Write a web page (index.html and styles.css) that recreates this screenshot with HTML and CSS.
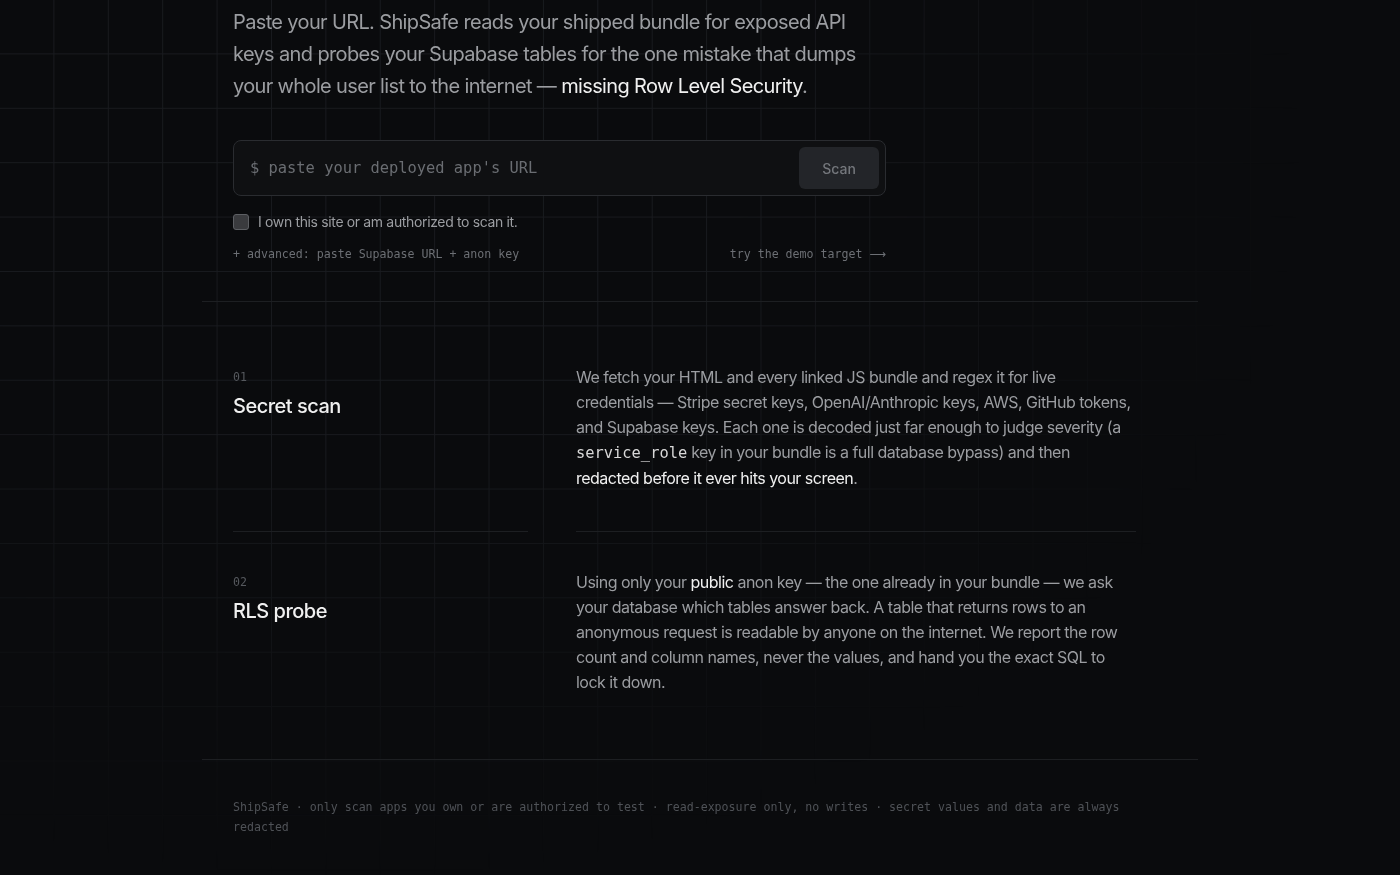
FILE: index.html
```html
<!DOCTYPE html>
<html lang="en">
<head>
<meta charset="utf-8">
<title>ShipSafe</title>
<link rel="stylesheet" href="styles.css">
</head>
<body>
<div class="grid-bg"></div>
<main class="container">
  <section class="hero">
    <p class="lead">Paste your URL. ShipSafe reads your shipped bundle for exposed API keys and probes your Supabase tables for the one mistake that dumps your whole user list to the internet — <span class="hl">missing Row Level Security</span>.</p>
    <form class="scan-box">
      <input class="scan-input" type="text" placeholder="$ paste your deployed app's URL">
      <button class="scan-btn" type="button">Scan</button>
    </form>
    <label class="consent"><span class="check"></span><span>I own this site or am authorized to scan it.</span></label>
    <div class="links">
      <span>+ advanced: paste Supabase URL + anon key</span>
      <span>try the demo target <span class="arrow">⟶</span></span>
    </div>
  </section>

  <section class="features">
    <div class="feature first">
      <div class="f-head">
        <div class="num">01</div>
        <h3 class="f-title">Secret scan</h3>
      </div>
      <p class="f-body">We fetch your HTML and every linked JS bundle and regex it for live credentials — Stripe secret keys, OpenAI/Anthropic keys, AWS, GitHub tokens, and Supabase keys. Each one is decoded just far enough to judge severity (a <code>service_role</code> key in your bundle is a full database bypass) and then <span class="hl">redacted before it ever hits your screen</span>.</p>
    </div>
    <div class="feature second">
      <div class="f-head">
        <div class="num">02</div>
        <h3 class="f-title">RLS probe</h3>
      </div>
      <p class="f-body">Using only your <span class="hl">public</span> anon key — the one already in your bundle — we ask your database which tables answer back. A table that returns rows to an anonymous request is readable by anyone on the internet. We report the row count and column names, never the values, and hand you the exact SQL to lock it down.</p>
    </div>
  </section>

  <footer class="footer">ShipSafe · only scan apps you own or are authorized to test · read-exposure only, no writes · secret values and data are always redacted</footer>
</main>
</body>
</html>
```

FILE: styles.css
```css
* { box-sizing: border-box; }

html, body {
  margin: 0;
  padding: 0;
  background: #0a0b0d;
  color: #9b9da1;
  font-family: Inter, "Noto Sans", sans-serif;
  min-height: 875px;
}

.grid-bg {
  position: fixed;
  inset: 0;
  pointer-events: none;
  background-image:
    linear-gradient(to right, transparent calc(100% - 1px), #191b1f 0),
    linear-gradient(to bottom, transparent calc(100% - 1px), #191b1f 0);
  background-size: 54.4px 54.4px;
  -webkit-mask-image: radial-gradient(ellipse 950px 720px at 25% 18%, #000 40%, transparent 100%);
  mask-image: radial-gradient(ellipse 950px 720px at 25% 18%, #000 40%, transparent 100%);
}

.container {
  position: relative;
  width: 996px;
  margin: 0 auto;
}

.hero {
  padding: 6px 31px 39px;
}

.lead {
  margin: 0;
  max-width: 640px;
  font-size: 20px;
  line-height: 32px;
  letter-spacing: -0.032em;
  color: #9b9da1;
}

.hl { color: #f0f0f0; }

.scan-box {
  margin: 38px 0 0;
  width: 653px;
  height: 56px;
  display: flex;
  align-items: center;
  padding: 0 6px 0 16px;
  background: #0f1012;
  border: 1px solid #2a2c30;
  border-radius: 8px;
}

.scan-input {
  flex: 1;
  background: transparent;
  border: 0;
  outline: none;
  font-family: "DejaVu Sans Mono", "Liberation Mono", monospace;
  font-size: 15.4px;
  color: #d0d0d0;
  padding: 0;
}
.scan-input::placeholder { color: #6a6d72; }

.scan-btn {
  width: 80px;
  height: 42px;
  border: 0;
  border-radius: 6px;
  background: #232529;
  color: #74777c;
  font-family: Inter, sans-serif;
  font-size: 14px;
  font-weight: 500;
}

.consent {
  margin-top: 18px;
  display: flex;
  align-items: center;
  gap: 9px;
  font-size: 14px;
  line-height: 16px;
  letter-spacing: -0.025em;
  color: #9b9da1;
}

.check {
  width: 16px;
  height: 16px;
  border-radius: 3px;
  background: #3a3b3e;
  border: 1px solid #5d5f63;
}

.links {
  margin-top: 16px;
  width: 653px;
  display: flex;
  justify-content: space-between;
  font-family: "DejaVu Sans Mono", "Liberation Mono", monospace;
  font-size: 11.6px;
  line-height: 16px;
  color: #6c6f74;
}
.arrow { font-family: "DejaVu Sans", sans-serif; }

.features {
  border-top: 1px solid #1d1f22;
  padding: 23px 31px 24px;
}

.feature {
  display: grid;
  grid-template-columns: 295px 560px;
  column-gap: 48px;
}

.f-head, .f-body {
  padding: 40px 0;
}
.feature.first .f-head,
.feature.first .f-body {
  border-bottom: 1px solid #1d1f22;
}
.feature.second .f-head,
.feature.second .f-body {
  padding-top: 38px;
}

.num {
  font-family: "DejaVu Sans Mono", "Liberation Mono", monospace;
  font-size: 11.6px;
  line-height: 25px;
  color: #56595e;
}

.f-title {
  margin: 2px 0 0;
  font-size: 20px;
  line-height: 28px;
  font-weight: 500;
  letter-spacing: -0.025em;
  color: #f0f0f0;
}

.f-body {
  margin: 0;
  font-size: 16px;
  line-height: 25px;
  letter-spacing: -0.032em;
  color: #9b9da1;
}

code {
  font-family: "DejaVu Sans Mono", "Liberation Mono", monospace;
  font-size: 15.4px;
  letter-spacing: 0;
  color: #d8d8d8;
}

.footer {
  border-top: 1px solid #1d1f22;
  padding: 37px 31px 40px;
  font-family: "DejaVu Sans Mono", "Liberation Mono", monospace;
  font-size: 11.6px;
  line-height: 20px;
  color: #4f5257;
}
```
